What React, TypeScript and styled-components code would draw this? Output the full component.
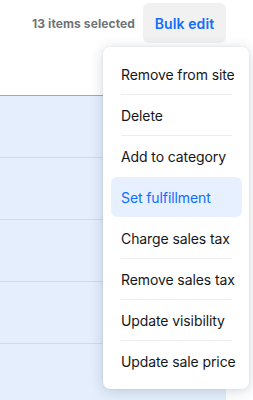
import React from "react";
import styled, { createGlobalStyle } from "styled-components";

const Global = createGlobalStyle`
  html, body { margin: 0; padding: 0; background: #ffffff; }
  body { font-family: Inter, "Noto Sans", "Liberation Sans", sans-serif; -webkit-font-smoothing: antialiased; }
`;

const Page = styled.div`
  position: relative;
  width: 253px;
  height: 400px;
  overflow: hidden;
  background: #ffffff;
`;

const Content = styled.div`
  width: 226px;
  display: flex;
  flex-direction: column;
`;

const Toolbar = styled.div`
  display: flex;
  align-items: center;
  justify-content: flex-end;
  gap: 8px;
  padding-top: 3px;
  height: 43px;
  box-sizing: border-box;
`;

const Count = styled.span`
  font-size: 12px;
  font-weight: 700;
  color: #6f7378;
  letter-spacing: 0.1px;
`;

const BulkButton = styled.button`
  height: 40px;
  width: 83px;
  border: none;
  border-radius: 6px;
  background: #f1f1f2;
  color: #116dff;
  font-family: inherit;
  font-size: 14px;
  font-weight: 600;
  letter-spacing: 0.1px;
  padding: 0;
`;

const TableHeader = styled.div`
  height: 52px;
  border-bottom: 1px solid #a4a8ad;
  box-shadow: 0 1px 0 #ccd3dc;
`;

const Row = styled.div`
  height: 61px;
  background: #e4eefc;
  border-bottom: 1px solid #d2dbe7;
`;

const Menu = styled.div`
  position: absolute;
  top: 47px;
  left: 103px;
  width: 146px;
  box-sizing: border-box;
  padding: 7px 7px 8px 8px;
  background: #ffffff;
  border-radius: 7px;
  box-shadow: 0 2px 14px rgba(22, 45, 80, 0.18), 0 0 3px rgba(22, 45, 80, 0.08);
  display: flex;
  flex-direction: column;
`;

const Item = styled.div<{ $active?: boolean }>`
  height: 40px;
  display: flex;
  align-items: center;
  padding-left: 10px;
  border-radius: 6px;
  font-size: 14px;
  font-weight: 400;
  letter-spacing: -0.1px;
  white-space: nowrap;
  color: ${(p) => (p.$active ? "#116dff" : "#15171b")};
  background: ${(p) => (p.$active ? "#e7f0ff" : "transparent")};
`;

const Separator = styled.div<{ $hidden?: boolean }>`
  height: 1px;
  margin: 0 10px;
  background: ${(p) => (p.$hidden ? "transparent" : "#ebedf0")};
`;

const items = [
  "Remove from site",
  "Delete",
  "Add to category",
  "Set fulfillment",
  "Charge sales tax",
  "Remove sales tax",
  "Update visibility",
  "Update sale price",
];
const activeIndex = 3;

export default function App() {
  return (
    <Page>
      <Global />
      <Content>
        <Toolbar>
          <Count>13 items selected</Count>
          <BulkButton>Bulk edit</BulkButton>
        </Toolbar>
        <TableHeader />
        <Row />
        <Row />
        <Row />
        <Row />
        <Row />
      </Content>
      <Menu>
        {items.map((label, i) => (
          <React.Fragment key={label}>
            {i > 0 && (
              <Separator $hidden={i === activeIndex || i === activeIndex + 1} />
            )}
            <Item $active={i === activeIndex}>{label}</Item>
          </React.Fragment>
        ))}
      </Menu>
    </Page>
  );
}
